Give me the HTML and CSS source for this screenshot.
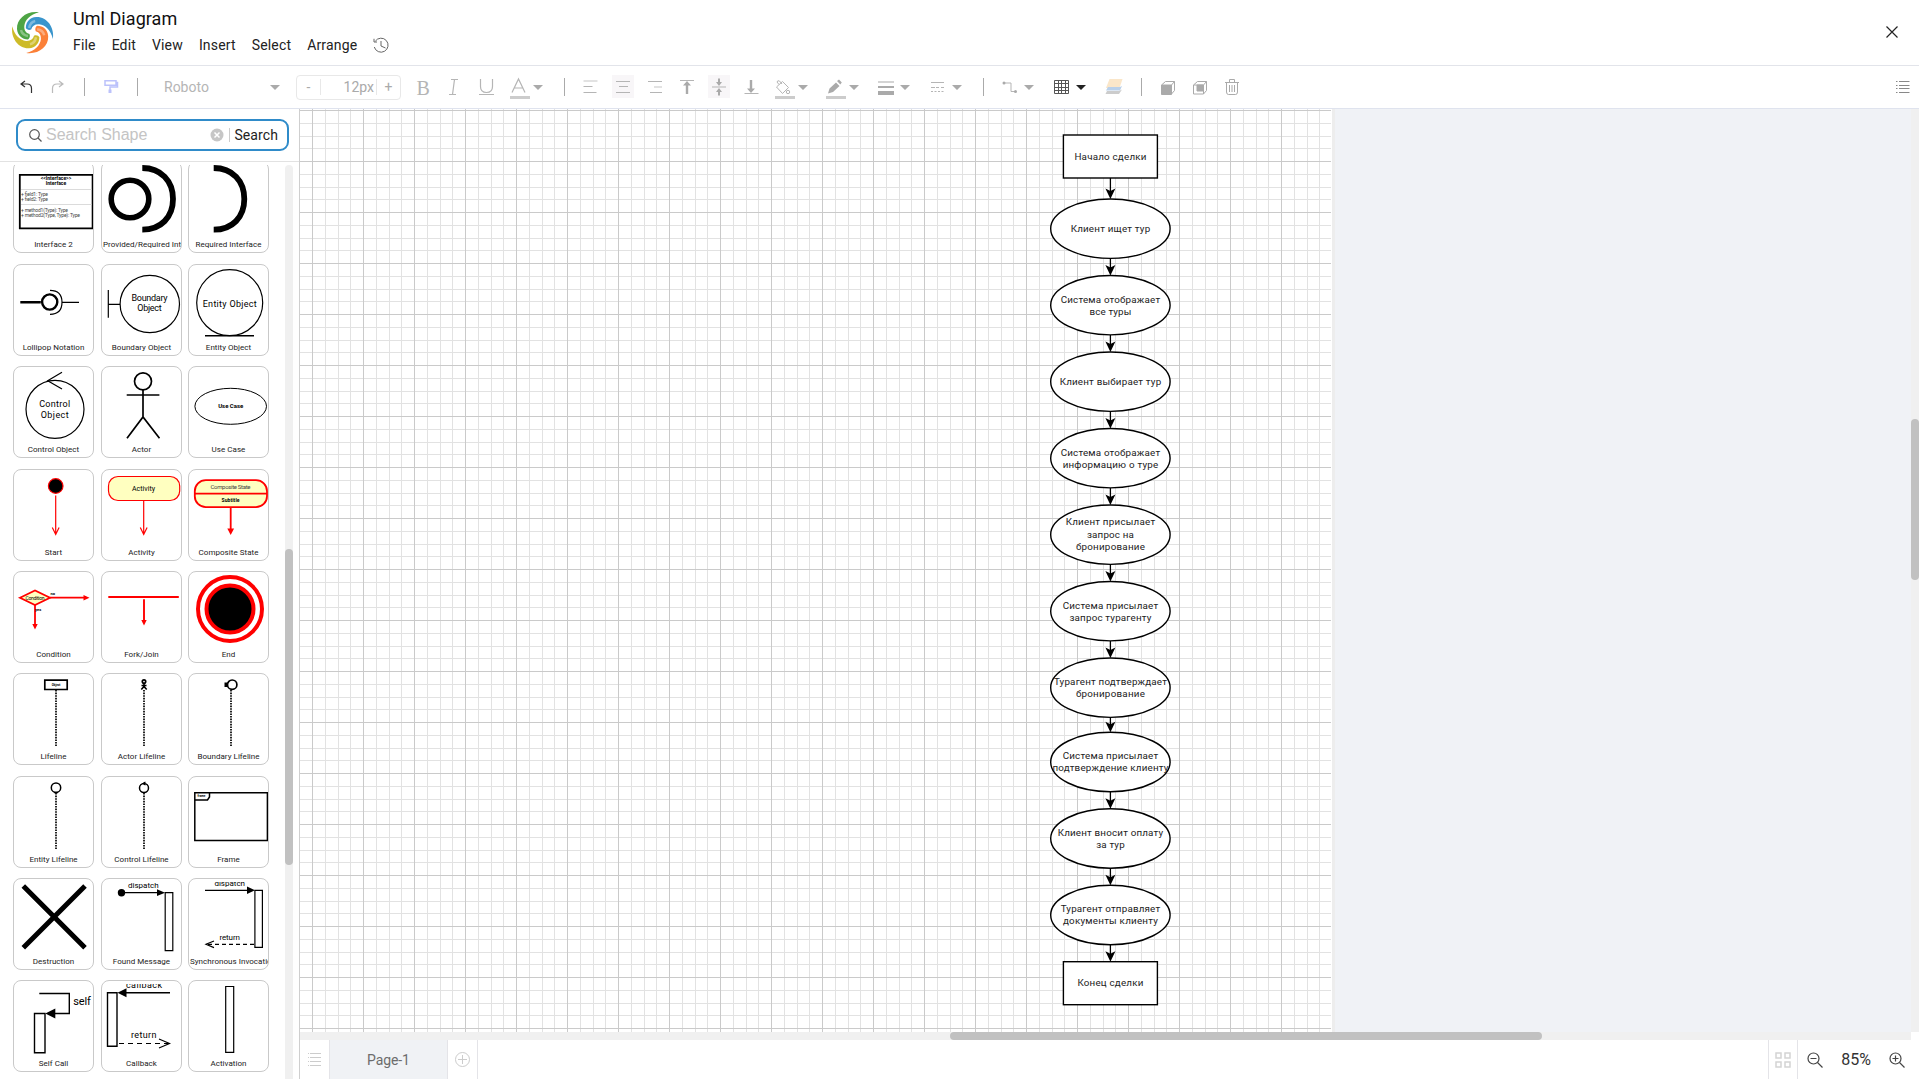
FILE: index.html
```html
<!DOCTYPE html>
<html lang="en">
<head>
<meta charset="utf-8">
<title>Uml Diagram</title>
<link rel="stylesheet" href="styles.css">
</head>
<body>
<header class="header">
  <svg class="logo" viewBox="8 8 50 50" width="50" height="50">
    <defs><path id="blade" d="M39 12.300C27 10.500 16.500 18.500 17 29C17.500 35.500 22 39.300 28 39.400C29.500 38.500 30.500 36.500 29.500 34C26 33 24 30.500 24.300 26C25 20 30 14.500 39 12.300Z"/></defs>
    <use href="#blade" fill="#4ea444"/>
    <use href="#blade" fill="#3a95cc" transform="rotate(90 32.6 32.6)"/>
    <use href="#blade" fill="#fb8038" transform="rotate(180 32.6 32.6)"/>
    <use href="#blade" fill="#cdbb28" transform="rotate(270 32.6 32.6)"/>
    <g fill="none" stroke="#fff" stroke-opacity=".35" stroke-width="2.500"><path id="shine" d="M21 30q1 5 7 6"/><use href="#shine" transform="rotate(90 32.6 32.6)"/><use href="#shine" transform="rotate(180 32.6 32.6)"/><use href="#shine" transform="rotate(270 32.6 32.6)"/></g>
  </svg>
  <div class="heading">
    <h1 class="title">Uml Diagram</h1>
    <nav class="menu">
      <span>File</span><span>Edit</span><span>View</span><span>Insert</span><span>Select</span><span>Arrange</span>
      <svg width="16" height="16" viewBox="0 0 16 16" fill="none" stroke="#666"><path d="M2.300 4.200A7 7 0 1 1 1.300 10M1 1.800V5H4M8 4v5l4.500 2"/></svg>
    </nav>
  </div>
  <svg class="close" width="12" height="12" viewBox="0 0 12 12" stroke="#222" stroke-width="1.200"><path d="M.5.5l11 11M11.500.5l-11 11"/></svg>
</header>

<div class="toolbar">
  <svg width="84" height="42" viewBox="0 66 84 42" fill="none">
    <path d="M25 81l-4 3 4 3M21.500 84H27q4.500 0 4.500 4.500V93" stroke="#333" stroke-width="1.200"/>
    <path d="M59 81l4 3-4 3M62.500 84H57q-4.500 0-4.500 4.500V93" stroke="#bbb" stroke-width="1.200"/>
  </svg>
  <i class="sep"></i>
  <svg width="52" height="42" viewBox="85 66 52 42" fill="none" stroke="#bcc2fb" stroke-width="1.500"><path d="M105 80.700h11v4.600h-11zM105 83h-.5M116 82.500h1.500v4.500h-7.500v3"/><path d="M110 89.500v3.500" stroke-width="3"/></svg>
  <i class="sep"></i>
  <div class="font"><span>Roboto</span><svg width="10" height="5" viewBox="0 0 10 5"><path d="M0 0h10L5 5z" fill="#aaa"/></svg></div>
  <div class="size"><span class="step">-</span><span class="value">12px</span><span class="step">+</span></div>
  <svg width="163" height="42" viewBox="401 66 163 42" fill="none" stroke="#b5b5b5" stroke-width="1.200">
    <text x="416.500" y="94.500" class="glyph">B</text>
    <path d="M451 79.500h7M449 94.500h7M454.500 79.500l-2 15"/>
    <path d="M480.500 79v7.500q0 6 6 6t6-6V79M479 94.500h15"/>
    <path d="M512 92.500l6.500-13.500 6.500 13.500M514.500 88h8"/>
    <path d="M510 97.500h20" stroke="#ccc" stroke-width="3"/><path d="M533 85h10l-5 5z" fill="#aaa" stroke="none"/>
  </svg>
  <i class="sep"></i>
  <svg width="418" height="42" viewBox="565 66 418 42" fill="none" stroke="#b5b5b5">
    <path d="M612 75h22v23h-22zM708 75h22v23h-22z" fill="#f8f6f8" stroke="none"/>
    <path d="M583.500 81h14" stroke="#e2e2e2" stroke-width="2"/><path d="M583.500 86.500h9M583.500 92.500h13M616 81.500h14M619 86.500h9M616 92.500h14M648 81.500h14M650 92.500h12"/><path d="M654 87h8" stroke="#e2e2e2" stroke-width="2"/>
    <path d="M680 80.500h14M712 87h14M744.500 93.500h14"/>
    <g fill="#aaa" stroke="none"><path d="M687 81l4 4.500h-2.800V94h-2.400v-8.500H683zM719 86l-3-4h2v-3.500h2V82h2zM719 88l-3 4h2v3.500h2V92h2zM751 93l-4-4.500h2.800V80h2.400v8.500h2.800z"/>
    <path d="M798 85h10l-5 5zM849 85h10l-5 5zM900 85h10l-5 5zM952 85h10l-5 5z"/>
    <path d="M828 93.500l1.500-5 6.500-6 3.500 3.500-6.500 6zM837 81l2-1.500 2.800 3-1.500 2z"/>
    <path d="M878 81.500h16v1h-16zM878 86h16v2h-16zM878 91h16v4h-16z"/></g>
    <path d="M776.500 87l6-5.500 6 6-6 6zM779 84.500l-2-2.500q.5-2 2.500-1l2.500 3"/><circle cx="788" cy="92" r="1.700"/>
    <path d="M775 97.500h20M826 97.500h20" stroke="#ccc" stroke-width="3"/>
    <path d="M931 82.500h13M931 87.500h4M936 87.500h3M941 87.500h3" /><path d="M931 91.500h13" stroke-dasharray="2 1.500"/>
  </svg>
  <i class="sep"></i>
  <svg width="157" height="42" viewBox="984 66 157 42" fill="none">
    <path d="M1004 83h7v8.500h5" stroke="#b5b5b5"/><circle cx="1004" cy="83" r="1.500" fill="#aaa"/><circle cx="1015.500" cy="91.500" r="1.500" fill="#aaa"/>
    <path d="M1024 85h10l-5 5z" fill="#aaa"/>
    <path d="M1054.500 80.500h14v13h-14zM1058.500 80v14M1061.500 80v14M1065.500 80v14M1054 83.500h15M1054 87.500h15M1054 90.500h15" stroke="#555"/>
    <path d="M1076 85h10l-5 5z" fill="#222"/>
    <path d="M1109.500 79h13l-3 9h-13.500z" fill="#fae6c9"/><path d="M1108 87h12l2-1-2 4.500h-14z" fill="#b9d0ea"/><path d="M1107 91h12l3-1.500-3 4.500h-13.500z" fill="#ccc"/>
  </svg>
  <i class="sep"></i>
  <svg width="120" height="42" viewBox="1142 66 120 42" fill="none" stroke="#aaa">
    <path d="M1161.500 85v9.500h10V85z" fill="#aaa"/><path d="M1161.500 85l4-3.500h9v9l-3 3.500M1171.500 85l3-3.500"/>
    <path d="M1193.500 85v9h10v-9zM1193.500 85l4-3.500h9v9l-3 3.500M1203.500 85l3-3.500"/><path d="M1197 85h6v6h-6z" fill="#aaa"/>
    <path d="M1225 82.500h14M1229.500 82v-2.500h5v2.500M1226.500 83v9q0 2.500 2 2.500h7q2 0 2-2.500v-9M1229.500 85v7M1232 85v7M1234.500 85v7"/>
  </svg>
  <svg class="options" width="14" height="14" viewBox="0 0 14 14" stroke="#888"><path d="M0 1.500h1.500M3 1.500h10.500M0 5.500h1.500M3 5.500h10.500M0 8.500h1.500M3 8.500h10.500M0 12.500h1.500M3 12.500h10.500"/></svg>
</div>

<main class="body">
  <aside class="sidebar">
    <div class="search-area">
      <div class="search">
        <svg width="13" height="13" viewBox="0 0 13 13" fill="none" stroke="#555" stroke-width="1.200"><circle cx="5.500" cy="5.500" r="4.800"/><path d="M9 9l3.500 3.500"/></svg>
        <span class="placeholder">Search Shape</span>
        <svg width="14" height="14" viewBox="0 0 14 14"><circle cx="7" cy="7" r="6.500" fill="#c6c6c6"/><path d="M4.500 4.500l5 5M9.500 4.500l-5 5" stroke="#fff" stroke-width="1.500"/></svg>
        <i class="bar"></i>
        <span class="go">Search</span>
      </div>
    </div>
    <div class="shapes">
      <div class="grid">
        <figure class="card"><svg viewBox="1 0 79 76"><path d="M6.800 12.800h72.800v53.600H6.800z" stroke-width="1.800"/><path d="M8 27.500h71M8 42.500h71" stroke="#ccc" stroke-width=".7"/><g class="t5 mid bold"><text x="43" y="17.500">&lt;&lt;Interface&gt;&gt;</text><text x="43" y="22.700">Interface</text></g><g class="t5 grey"><text x="8" y="33.700" textLength="27">+ field1: Type</text><text x="8" y="38.700" textLength="27">+ field2: Type</text><text x="8" y="49.700" textLength="47">+ method1(Type): Type</text><text x="8" y="55" textLength="59">+ method2(Type, Type): Type</text></g></svg><figcaption>Interface 2</figcaption></figure>
        <figure class="card"><svg viewBox="1 0 79 76"><circle cx="29" cy="37" r="18.800" stroke-width="5.600"/><path d="M41.300 6C60 6 72 19 72 37S60 67.700 41.300 67.700" stroke-width="5.800"/></svg><figcaption class="left">Provided/Required Interface</figcaption></figure>
        <figure class="card"><svg viewBox="1 0 79 76"><path d="M25.700 6C44.500 6 56.300 19 56.300 37S44.500 67.700 25.700 67.700" stroke-width="5.800"/></svg><figcaption>Required Interface</figcaption></figure>

        <figure class="card"><svg viewBox="1 1 79 76"><path d="M7.300 38.300h20.500" stroke-width="2.400"/><circle cx="36.700" cy="38" r="7.600" stroke-width="2.400"/><path d="M37 26.300q12 0 12 12t-12 12M49 38.400h17"/></svg><figcaption>Lollipop Notation</figcaption></figure>
        <figure class="card"><svg viewBox="1 1 79 76"><path d="M7.300 26v27.700M7.300 40.300H19"/><ellipse cx="48.800" cy="40" rx="29.700" ry="28.700"/><g class="t9 mid"><text x="48.500" y="36.500" textLength="36">Boundary</text><text x="48.500" y="46.500" textLength="24.500">Object</text></g></svg><figcaption>Boundary Object</figcaption></figure>
        <figure class="card"><svg viewBox="1 1 79 76"><circle cx="41.700" cy="38.700" r="33"/><path d="M17 71.700h49" stroke-width="1.500"/><text class="t9 mid" x="41.700" y="42.500" textLength="54">Entity Object</text></svg><figcaption>Entity Object</figcaption></figure>

        <figure class="card"><svg viewBox="1 1 79 76"><circle cx="42" cy="43.300" r="29"/><path d="M49 6.300l-14.300 8.400L49 23"/><g class="t9 mid"><text x="41.700" y="40.700" textLength="31">Control</text><text x="41.700" y="51.500" textLength="28">Object</text></g></svg><figcaption>Control Object</figcaption></figure>
        <figure class="card"><svg viewBox="1 1 79 76"><g stroke-width="1.700"><circle cx="42" cy="15.300" r="8.500"/><path d="M25.700 29h32.700M42 24v27M26 72.300L42 51l16.500 21.300"/></g></svg><figcaption>Actor</figcaption></figure>
        <figure class="card"><svg viewBox="1 1 79 76"><ellipse cx="42.700" cy="40.300" rx="35.800" ry="18" stroke-width="1"/><text class="t6 mid bold" x="42.700" y="42" textLength="25">Use Case</text></svg><figcaption>Use Case</figcaption></figure>

        <figure class="card red"><svg viewBox="1 1 79 76"><circle cx="42.700" cy="17" r="7.300" class="black"/><path d="M42.700 26.500v38M39.300 58.500l3.400 7 3.400-7"/></svg><figcaption>Start</figcaption></figure>
        <figure class="card red"><svg viewBox="1 1 79 76"><rect x="7.500" y="7.500" width="71.200" height="24" rx="9.500" class="yellow"/><path d="M42.700 32v33M39.300 58.500l3.400 7 3.400-7"/><text class="t7 mid" x="42.500" y="21.800" textLength="23">Activity</text></svg><figcaption>Activity</figcaption></figure>
        <figure class="card red"><svg viewBox="1 1 79 76"><g stroke-width="1.800"><rect x="6.800" y="11.200" width="72.200" height="27" rx="11" class="yellow"/><path d="M7 24.700h72M42.700 38v23"/></g><path d="M39.300 59.500h6.800l-3.400 6.500z" class="solid"/><text class="t6 mid grey" x="42.500" y="20" textLength="40">Composite State</text><text class="t5 mid bold" x="42.500" y="32.700" textLength="18">Subtitle</text></svg><figcaption>Composite State</figcaption></figure>

        <figure class="card red"><svg viewBox="1 1 79 76"><g stroke-width="1.800"><path d="M7 26.700L22 19.500l15 7.200L22 34z" class="yellow"/><path d="M37 26.700h35M22 34v19"/></g><path d="M70.500 24v5.400l6-2.700zM19.300 53h5.400L22 58.500z" class="solid"/><text class="t5 mid" x="22" y="28.500" textLength="19">Condition</text><g class="t4 bold"><text x="37.500" y="23.700">no</text><text x="22" y="40">yes</text></g></svg><figcaption>Condition</figcaption></figure>
        <figure class="card red"><svg viewBox="1 1 79 76"><path d="M7.300 26h70.500M43 28.300V50" stroke-width="1.900"/><path d="M40.300 49h5.400L43 54.500z" class="solid"/></svg><figcaption>Fork/Join</figcaption></figure>
        <figure class="card red"><svg viewBox="1 1 79 76"><circle cx="42" cy="38" r="32" stroke-width="4"/><circle cx="42" cy="38" r="23.500" stroke-width="4" class="black"/></svg><figcaption>End</figcaption></figure>

        <figure class="card"><svg viewBox="1 1 79 76"><path d="M31.800 7.200h22.400v9.300H31.800z" stroke-width="1.700"/><text class="t3 mid bold" x="43" y="12.800">Object</text><path class="life" d="M43 17v56"/></svg><figcaption>Lifeline</figcaption></figure>
        <figure class="card"><svg viewBox="1 1 79 76"><circle cx="43" cy="8.500" r="1.700" stroke-width="1.700"/><path d="M43 10v4M40.500 12.500h5M40.300 16.500l2.700-3 2.700 3" stroke-width="1.600"/><path class="life" d="M43 17v56"/></svg><figcaption>Actor Lifeline</figcaption></figure>
        <figure class="card"><svg viewBox="1 1 79 76"><circle cx="44.200" cy="11.700" r="4.700" stroke-width="1.700"/><path d="M38 9.500V14" stroke-width="3"/><path class="life" d="M43 17v56"/></svg><figcaption>Boundary Lifeline</figcaption></figure>

        <figure class="card"><svg viewBox="1 1 79 76"><circle cx="43" cy="11.700" r="4.700" stroke-width="1.500"/><path d="M41 16.500h4" stroke-width="1.500"/><path class="life" d="M43 17v56"/></svg><figcaption>Entity Lifeline</figcaption></figure>
        <figure class="card"><svg viewBox="1 1 79 76"><circle cx="43" cy="12" r="4.500" stroke-width="1.500"/><path d="M44.500 6l-2.500 1.500 2.500 1.500"/><path class="life" d="M43 17v56"/></svg><figcaption>Control Lifeline</figcaption></figure>
        <figure class="card"><svg viewBox="1 1 79 76"><path d="M6.800 16.800h72.600v47.600H6.800zM6.800 24h12.700l2-3v-4" stroke-width="1.500"/><text class="t3 mid bold" x="13.500" y="21">frame</text></svg><figcaption>Frame</figcaption></figure>

        <figure class="card"><svg viewBox="1 1 79 76"><path d="M10.300 8L72 69.700M72 8L10.300 69.700" stroke-width="5"/></svg><figcaption>Destruction</figcaption></figure>
        <figure class="card"><svg viewBox="1 1 79 76"><circle cx="20.500" cy="14.700" r="3.700" class="black" stroke="none"/><path d="M20 14.700h38M64.200 14.700h7.600v58h-7.600z"/><path d="M56 11.300v6.800l8-3.400z" class="dark"/><text class="t8 mid" x="42.300" y="9.700" textLength="30.500">dispatch</text></svg><figcaption>Found Message</figcaption></figure>
        <figure class="card"><svg viewBox="1 1 79 76"><path d="M17 12.300h44M66.900 12.300h7.500v57h-7.500z"/><path d="M59 8.600V16l8-3.700z" class="dark"/><path d="M66 66.300H18" stroke-dasharray="4 3"/><path d="M26 63l-8 3.300 8 3.300"/><text class="t8 mid" x="41.700" y="7.700" textLength="30.500">dispatch</text><text class="t8 mid" x="41.700" y="62" textLength="20.500">return</text><path class="mask" d="M14 1h50v3H14z"/></svg><figcaption class="left">Synchronous Invocation</figcaption></figure>

        <figure class="card"><svg viewBox="1 1 79 76"><path d="M26.300 13.500h30v20H40M21.500 33.500h10.500v39.300H21.500z" stroke-width="1.400"/><path d="M42.300 28.500v10l-10-5z" class="dark"/><text class="t11" x="60.300" y="24.800" textLength="17.500">self</text></svg><figcaption>Self Call</figcaption></figure>
        <figure class="card"><svg viewBox="1 1 79 76"><path d="M6.500 12.800h9.500v53.400H6.500zM69 12.800H24" stroke-width="1.400"/><path d="M25.500 8.300v9l-9-4.500z" class="dark"/><path d="M18 63.500h50" stroke-dasharray="5 4"/><path d="M58 59l10.500 4.500L58 68"/><text class="t9 mid" x="43" y="8" textLength="36">callback</text><text class="t9 mid" x="42.700" y="57.800" textLength="25.500">return</text><path class="mask" d="M18 1h50v3H18z"/></svg><figcaption>Callback</figcaption></figure>
        <figure class="card"><svg viewBox="1 1 79 76"><path d="M37.700 6.500h8v65.800h-8z"/></svg><figcaption>Activation</figcaption></figure>
      </div>
      <div class="vtrack"><div class="vthumb"></div></div>
    </div>
  </aside>

  <section class="workspace">
    <div class="viewport">
      <svg class="canvas" width="1611" height="923" viewBox="300 109 1611 923">
        <defs>
          <pattern id="lines" patternUnits="userSpaceOnUse" x="312" y="110" width="51" height="51">
            <path d="M13.500 0v51M26.500 0v51M38.500 0v51M0 13.500h51M0 26.500h51M0 38.500h51" stroke="#e2e2e2"/>
            <path d="M.5 0v51M0 .5h51" stroke="#cacaca"/>
          </pattern>
          <ellipse id="step" rx="59.700" ry="29.700"/>
          <path id="head" d="M-5-10.500L0-8 5-10.500 0 0z"/>
        </defs>
        <path d="M300 109h1035v923H300z" fill="#ededed"/>
        <path d="M300 109h1032v923H300z" fill="#fff"/>
        <path d="M300 109h1031v923H300z" fill="url(#lines)"/>
        <g class="nodes">
          <rect x="1063.400" y="135" width="94" height="43"/>
          <use href="#step" x="1110.400" y="228.700"/><use href="#step" x="1110.400" y="305.200"/><use href="#step" x="1110.400" y="381.700"/><use href="#step" x="1110.400" y="458.200"/><use href="#step" x="1110.400" y="534.700"/><use href="#step" x="1110.400" y="611.200"/><use href="#step" x="1110.400" y="687.700"/><use href="#step" x="1110.400" y="762"/><use href="#step" x="1110.400" y="838.500"/><use href="#step" x="1110.400" y="915"/>
          <rect x="1063.400" y="961.700" width="94" height="43"/>
        </g>
        <path d="M1110.400 178v16M1110.400 258.500v12M1110.400 335v12M1110.400 411.500v12M1110.400 488v12M1110.400 564.500v12M1110.400 641v12M1110.400 717.500v10M1110.400 792v12M1110.400 868.300v12M1110.400 945v12" stroke="#000" stroke-width="1.300"/>
        <g>
          <use href="#head" x="1110.400" y="199"/><use href="#head" x="1110.400" y="275.500"/><use href="#head" x="1110.400" y="352"/><use href="#head" x="1110.400" y="428.500"/><use href="#head" x="1110.400" y="505"/><use href="#head" x="1110.400" y="581.500"/><use href="#head" x="1110.400" y="658"/><use href="#head" x="1110.400" y="732.300"/><use href="#head" x="1110.400" y="808.800"/><use href="#head" x="1110.400" y="885.300"/><use href="#head" x="1110.400" y="961.700"/>
        </g>
        <g class="labels">
          <text x="1110.400" y="160" textLength="72">Начало сделки</text>
          <text x="1110.400" y="232" textLength="79.500">Клиент ищет тур</text>
          <text x="1110.400" y="303" textLength="99.500">Система отображает</text><text x="1110.400" y="315" textLength="42">все туры</text>
          <text x="1110.400" y="385" textLength="101.500">Клиент выбирает тур</text>
          <text x="1110.400" y="456" textLength="99.500">Система отображает</text><text x="1110.400" y="468" textLength="95.500">информацию о туре</text>
          <text x="1110.400" y="525" textLength="89.500">Клиент присылает</text><text x="1110.400" y="538" textLength="47">запрос на</text><text x="1110.400" y="550" textLength="69">бронирование</text>
          <text x="1110.400" y="609" textLength="95.500">Система присылает</text><text x="1110.400" y="621" textLength="82">запрос турагенту</text>
          <text x="1110.400" y="685" textLength="113">Турагент подтверждает</text><text x="1110.400" y="697" textLength="69">бронирование</text>
          <text x="1110.400" y="759" textLength="95.500">Система присылает</text><text x="1110.400" y="771" textLength="116">подтверждение клиенту</text>
          <text x="1110.400" y="836" textLength="105.500">Клиент вносит оплату</text><text x="1110.400" y="848" textLength="28.500">за тур</text>
          <text x="1110.400" y="912" textLength="99.500">Турагент отправляет</text><text x="1110.400" y="924" textLength="95">документы клиенту</text>
          <text x="1110.400" y="986" textLength="66">Конец сделки</text>
        </g>
      </svg>
      <div class="vtrack2"><div class="vthumb2"></div></div>
    </div>
    <div class="htrack"><div class="hthumb"></div></div>
    <footer class="footer">
      <div class="pages"><svg width="13" height="13" viewBox="0 0 13 13" stroke="#ccc"><path d="M0 .5h1M2 .5h11M0 4.500h1M2 4.500h11M0 8.500h1M2 8.500h11M0 12.500h1M2 12.500h11"/></svg></div>
      <div class="tab">Page-1</div>
      <div class="add"><svg width="15" height="15" viewBox="0 0 15 15" fill="none" stroke="#ccc"><circle cx="7.500" cy="7.500" r="7"/><path d="M7.500 3v9M3 7.500h9"/></svg></div>
      <div class="tiles"><svg width="16" height="16" viewBox="0 0 16 16" fill="none" stroke="#d4d4d4" stroke-width="1.500"><path d="M1 1h5v5H1zM10 1h5v5h-5zM1 10h5v5H1zM10 10h5v5h-5z"/></svg></div>
      <div class="zoom">
        <svg width="16" height="16" viewBox="0 0 16 16" fill="none" stroke="#444" stroke-width="1.200"><circle cx="6.500" cy="6.500" r="5.500"/><path d="M10.500 10.500l5 5M3.500 6.500h6"/></svg>
        <span>85%</span>
        <svg width="16" height="16" viewBox="0 0 16 16" fill="none" stroke="#444" stroke-width="1.200"><circle cx="6.500" cy="6.500" r="5.500"/><path d="M10.500 10.500l5 5M3.500 6.500h6M6.500 3.500v6"/></svg>
      </div>
    </footer>
  </section>
</main>
</body>
</html>
```
FILE: styles.css
```css
* { box-sizing: border-box; }
html, body { height: 100%; }
body { margin: 0; display: flex; flex-direction: column; overflow: hidden; background: #fff; color: #222; font-family: Roboto, "Liberation Sans", sans-serif; }
svg { display: block; flex: none; }

.header { height: 66px; flex: none; display: flex; padding: 8px 21px 0 8px; border-bottom: 1px solid #e2e4ea; }
.heading { margin-left: 15px; }
.title { margin: -1px 0 0; font-size: 18px; font-weight: 400; line-height: 24px; letter-spacing: .05px; color: #111; }
.menu { display: flex; align-items: center; gap: 16px; margin-top: 3px; font-size: 14px; line-height: 22px; letter-spacing: .16px; }
.close { margin: 18px 0 0 auto; }

.toolbar { height: 43px; flex: none; display: flex; align-items: center; border-bottom: 1px solid #dfe3ee; }
.sep { flex: none; width: 1px; height: 18px; background: #aaa; }
.font { width: 158px; padding: 0 16px 0 26px; display: flex; align-items: center; justify-content: space-between; color: #b5b5b5; font-size: 14px; }
.size { width: 105px; height: 25px; display: flex; align-items: center; border: 1px solid #e8e8e8; border-radius: 4px; color: #aaa; font-size: 14px; }
.step { width: 23px; text-align: center; }
.value { flex: 1; text-align: right; padding-right: 2px; border: solid #e8e8e8; border-width: 0 1px; }
.glyph { font: 20px "Liberation Serif", serif; fill: #b5b5b5; stroke: none; }
.options { margin: 0 9px 0 auto; }

.body { flex: 1; min-height: 0; display: flex; }
.sidebar { width: 299px; flex: none; display: flex; flex-direction: column; }
.search-area { height: 53px; flex: none; padding: 10px 10px 0 16px; border-bottom: 1px solid #e2e2e2; }
.search { height: 32px; display: flex; align-items: center; padding: 0 9px 0 11px; border: 2px solid #2f8bc9; border-radius: 9px; }
.placeholder { flex: 1; margin-left: 4px; font: 16px "Liberation Sans", sans-serif; color: #c4c4c4; }
.bar { width: 1px; height: 14px; margin: 0 4px 0 5px; background: #ccc; }
.go { font-size: 14px; letter-spacing: .1px; }
.shapes { flex: 1; min-height: 0; margin-top: 3px; display: flex; justify-content: space-between; overflow: hidden; padding: 0 6px 0 13px; }
.grid { display: grid; margin-top: -4px; grid-template-columns: 88px 87px 81px; grid-template-rows: 103px 102px 103px 102px 102px 103px 102px 102px 92px; }
.card { width: 81px; height: 92px; margin: 0; border: 1px solid #c9c9c9; border-radius: 8px; overflow: hidden; text-align: center; }
.card svg { width: 79px; height: 76px; fill: none; stroke: #000; stroke-width: 1.2; overflow: hidden; }
.card figcaption { font-size: 8px; line-height: 12px; letter-spacing: .04px; white-space: nowrap; margin-top: 1px; }
.card .left { text-align: left; padding-left: 1px; }
.card.red svg { stroke: #f00; }
.card .black { fill: #000; }
.card .yellow { fill: #ffffc0; }
.card .solid { fill: #f00; stroke: none; }
.card .dark { fill: #000; stroke: none; }
.card .mask { fill: #fff; stroke: none; }
.card text { fill: #000; stroke: none; }
.card .grey text, .card text.grey { fill: #444; }
.mid { text-anchor: middle; }
.bold { font-weight: 700; }
.t3 { font-size: 3px; }
.t4 { font-size: 4px; }
.t5 { font-size: 5px; }
.t6 { font-size: 6px; }
.t7 { font-size: 7px; }
.t8 { font-size: 8px; }
.t9 { font-size: 9px; }
.t11 { font-size: 11px; }
.life { stroke-width: 1.7; stroke-dasharray: 1.6 1; }
.vtrack { width: 8px; background: #f0f0f0; border-radius: 4px 4px 0 0; }
.vthumb { height: 316px; margin-top: 384px; background: #c1c1c1; border-radius: 4px; }

.workspace { flex: 1; min-width: 0; display: flex; flex-direction: column; border-left: 1px solid #cfcfcf; }
.viewport { height: 923px; flex: none; display: flex; background: #f0f2f6; }
.nodes { fill: #fff; stroke: #000; stroke-width: 1.4; }
.labels { font-size: 9.8px; text-anchor: middle; fill: #222; }
.vtrack2 { width: 8px; background: #f0f0f0; padding-top: 310px; }
.vthumb2 { height: 161px; background: #c1c1c1; border-radius: 4px; }
.htrack { width: 1611px; height: 8px; flex: none; padding-left: 650px; background: #f0f0f0; }
.hthumb { width: 592px; height: 8px; background: #c1c1c1; border-radius: 4px; }
.footer { flex: 1; display: flex; }
.footer > div { display: flex; align-items: center; }
.pages { width: 30px; padding-left: 8px; border-right: 1px solid #e4e4e8; }
.tab { width: 118px; justify-content: center; background: #f0f2f5; border-right: 1px solid #e4e4e8; color: #6c6c6c; font-size: 14px; letter-spacing: -.1px; }
.add { width: 30px; justify-content: center; border-right: 1px solid #e4e4e8; }
.tiles { width: 30px; margin-left: auto; justify-content: center; border: solid #e4e4e8; border-width: 0 1px; }
.zoom { width: 121px; padding: 0 14px 0 9px; justify-content: space-between; font-size: 16px; color: #333; }
```
